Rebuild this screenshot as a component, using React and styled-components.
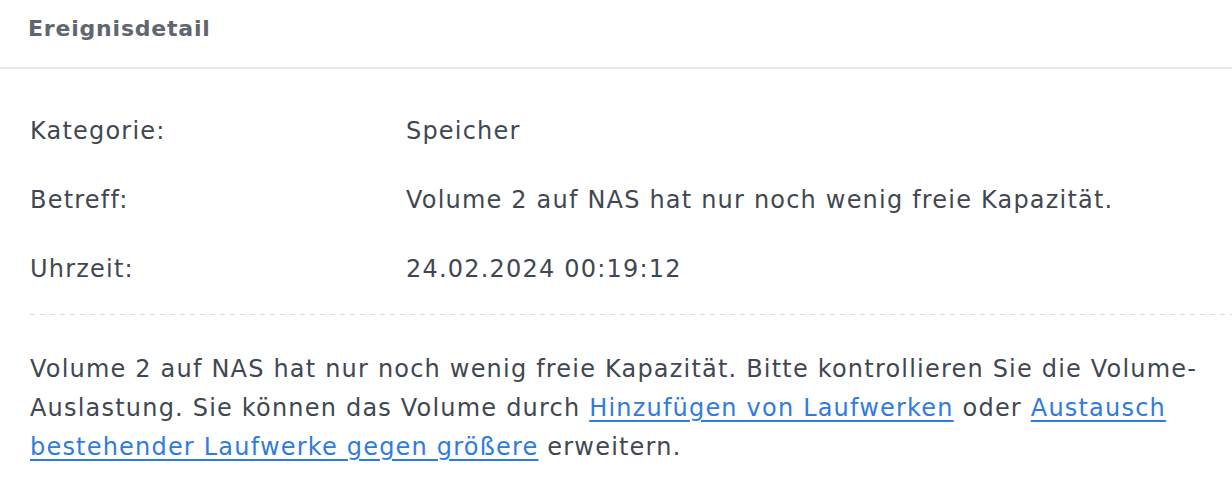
import React from "react";
import styled, { createGlobalStyle } from "styled-components";

const GlobalStyle = createGlobalStyle`
  body {
    margin: 0;
    background: #ffffff;
    font-family: "DejaVu Sans", Verdana, sans-serif;
  }
`;

const Panel = styled.div`
  width: 1232px;
  height: 484px;
  background: #fff;
  overflow: hidden;
`;

const Header = styled.div`
  height: 69px;
  box-sizing: border-box;
  padding: 0 0 10px 28px;
  display: flex;
  align-items: center;
  border-bottom: 2px solid #e6e9ee;
  font-size: 22px;
  font-weight: bold;
  letter-spacing: 0.8px;
  color: #5f6670;
`;

const Body = styled.div`
  padding-left: 30px;
  color: #3f4852;
  font-size: 24px;
  letter-spacing: 1.2px;
`;

const Details = styled.div`
  padding-top: 48px;
  padding-bottom: 31px;
  display: flex;
  flex-direction: column;
  gap: 41px;
`;

const Row = styled.div`
  display: grid;
  grid-template-columns: 376px 1fr;
  line-height: 28px;
`;

const Dashed = styled.div`
  height: 1px;
  background: repeating-linear-gradient(
    to right,
    #d5dbe3 0,
    #d5dbe3 5px,
    transparent 5px,
    transparent 10px
  );
`;

const Message = styled.p`
  margin: 0;
  padding: 35px 20px 0 0;
  line-height: 39px;
`;

const Link = styled.a`
  color: #2f7be0;
  text-decoration: underline;
  text-underline-offset: 4px;
`;

const rows = [
  ["Kategorie:", "Speicher"],
  ["Betreff:", "Volume 2 auf NAS hat nur noch wenig freie Kapazität."],
  ["Uhrzeit:", "24.02.2024 00:19:12"],
];

export default function App() {
  return (
    <>
      <GlobalStyle />
      <Panel>
        <Header>Ereignisdetail</Header>
        <Body>
          <Details>
            {rows.map(([label, value]) => (
              <Row key={label}>
                <span>{label}</span>
                <span>{value}</span>
              </Row>
            ))}
          </Details>
          <Dashed />
          <Message>
            Volume 2 auf NAS hat nur noch wenig freie Kapazität. Bitte
            kontrollieren Sie die Volume-Auslastung. Sie können das Volume
            durch <Link href="#">Hinzufügen von Laufwerken</Link> oder{" "}
            <Link href="#">Austausch bestehender Laufwerke gegen größere</Link>{" "}
            erweitern.
          </Message>
        </Body>
      </Panel>
    </>
  );
}
